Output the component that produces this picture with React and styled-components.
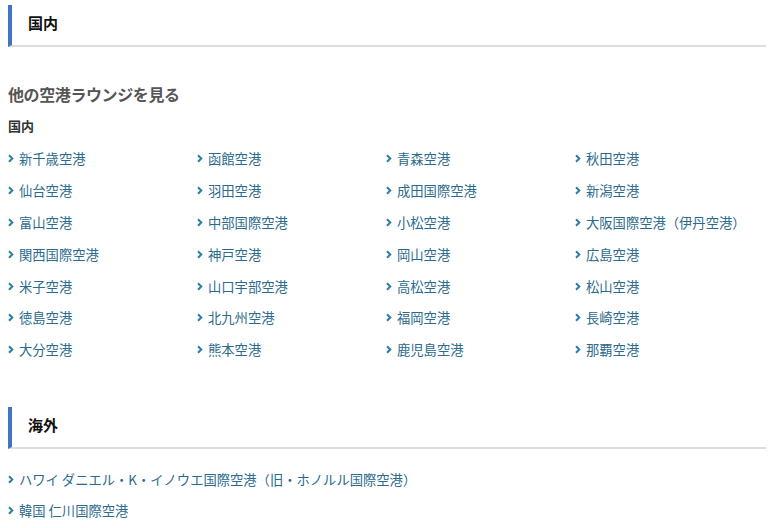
import React from "react";
import styled, { createGlobalStyle } from "styled-components";

const Global = createGlobalStyle`
  html, body { margin: 0; padding: 0; background: #fff; }
  body { font-family: "Noto Sans CJK JP", "Noto Sans", sans-serif; }
`;

const Page = styled.div`
  width: 758px;
  padding: 5px 0 0 8px;
`;

const SectionHeader = styled.h2`
  margin: ${(p) => p.$top || 0}px 0 0;
  height: 42px;
  box-sizing: border-box;
  border-left: 4px solid #4472c4;
  border-bottom: 2px solid #dedede;
  padding: 0 0 5px 16px;
  display: flex;
  align-items: center;
  font-size: 15px;
  font-weight: 700;
  color: #111;
`;

const Title = styled.h3`
  margin: 35px 0 0;
  font-size: 16px;
  line-height: 24px;
  font-weight: 700;
  color: #555;
  letter-spacing: -0.4px;
`;

const SubTitle = styled.h4`
  margin: 10px 0 0;
  font-size: 13px;
  line-height: 20px;
  font-weight: 700;
  color: #333;
`;

const Grid = styled.ul`
  list-style: none;
  margin: ${(p) => p.$top || 0}px 0 0;
  padding: 0;
  display: grid;
  grid-template-columns: ${(p) => (p.$cols ? `repeat(${p.$cols}, 189px)` : "1fr")};
  grid-auto-rows: ${(p) => p.$row || 32}px;
`;

const Item = styled.li`
  display: flex;
  align-items: center;
  gap: 5px;
  font-size: 13.3px;
  color: #2a6a8c;
  white-space: nowrap;
`;

const Chevron = () => (
  <svg width="6" height="9" viewBox="0 0 6 9" style={{ flex: "none" }}>
    <path d="M1 1.2 L4.3 4.5 L1 7.8" fill="none" stroke="#2e7ca6" strokeWidth="2" />
  </svg>
);

const domestic = [
  "新千歳空港", "函館空港", "青森空港", "秋田空港",
  "仙台空港", "羽田空港", "成田国際空港", "新潟空港",
  "富山空港", "中部国際空港", "小松空港", "大阪国際空港（伊丹空港）",
  "関西国際空港", "神戸空港", "岡山空港", "広島空港",
  "米子空港", "山口宇部空港", "高松空港", "松山空港",
  "徳島空港", "北九州空港", "福岡空港", "長崎空港",
  "大分空港", "熊本空港", "鹿児島空港", "那覇空港",
];

const overseas = [
  "ハワイ ダニエル・K・イノウエ国際空港（旧・ホノルル国際空港）",
  "韓国 仁川国際空港",
];

export default function App() {
  return (
    <Page>
      <Global />
      <SectionHeader>国内</SectionHeader>
      <Title>他の空港ラウンジを見る</Title>
      <SubTitle>国内</SubTitle>
      <Grid $cols={4} $top={7} $row={31.8}>
        {domestic.map((n) => (
          <Item key={n}>
            <Chevron />
            {n}
          </Item>
        ))}
      </Grid>
      <SectionHeader $top={41}>海外</SectionHeader>
      <Grid $top={15} $row={31}>
        {overseas.map((n) => (
          <Item key={n}>
            <Chevron />
            {n}
          </Item>
        ))}
      </Grid>
    </Page>
  );
}
